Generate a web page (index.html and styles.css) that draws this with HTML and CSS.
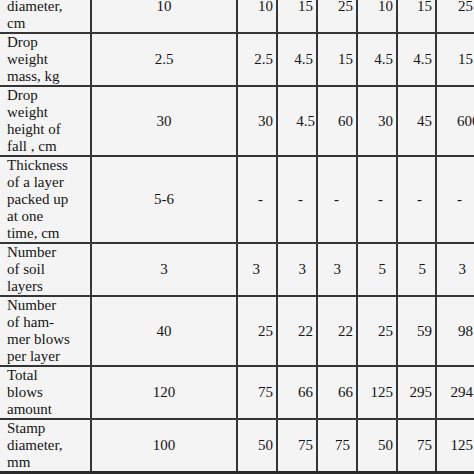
FILE: index.html
```html
<!DOCTYPE html>
<html>
<head>
<meta charset="utf-8">
<link rel="stylesheet" href="styles.css">
</head>
<body>
<table class="data">
  <colgroup>
    <col class="c-label"><col class="c-base"><col class="c-n"><col class="c-n"><col class="c-n"><col class="c-n"><col class="c-n7"><col class="c-n8">
  </colgroup>
  <tbody>
    <tr class="first">
      <td class="label">Mold<br>diameter,<br>cm</td>
      <td class="base">10</td>
      <td class="num">10</td><td class="num">15</td><td class="num">25</td><td class="num">10</td><td class="num">15</td><td class="num">25</td>
    </tr>
    <tr>
      <td class="label">Drop<br>weight<br>mass, kg</td>
      <td class="base">2.5</td>
      <td class="num">2.5</td><td class="num">4.5</td><td class="num">15</td><td class="num">4.5</td><td class="num">4.5</td><td class="num">15</td>
    </tr>
    <tr>
      <td class="label">Drop<br>weight<br>height of<br>fall , cm</td>
      <td class="base">30</td>
      <td class="num">30</td><td class="num p2">4.5</td><td class="num">60</td><td class="num">30</td><td class="num">45</td><td class="num over">600</td>
    </tr>
    <tr>
      <td class="label">Thickness<br>of a layer<br>packed up<br>at one<br>time, cm</td>
      <td class="base">5-6</td>
      <td class="num p14">-</td><td class="num p14">-</td><td class="num p18">-</td><td class="num p14">-</td><td class="num p14">-</td><td class="num p15">-</td>
    </tr>
    <tr>
      <td class="label">Number<br>of soil<br>layers</td>
      <td class="base">3</td>
      <td class="num p17">3</td><td class="num p11">3</td><td class="num p16">3</td><td class="num p11">5</td><td class="num p10">5</td><td class="num p11">3</td>
    </tr>
    <tr>
      <td class="label">Number<br>of ham-<br>mer blows<br>per layer</td>
      <td class="base">40</td>
      <td class="num">25</td><td class="num">22</td><td class="num">22</td><td class="num">25</td><td class="num">59</td><td class="num">98</td>
    </tr>
    <tr>
      <td class="label">Total<br>blows<br>amount</td>
      <td class="base">120</td>
      <td class="num">75</td><td class="num">66</td><td class="num">66</td><td class="num">125</td><td class="num">295</td><td class="num">294</td>
    </tr>
    <tr class="last">
      <td class="label">Stamp<br>diameter,<br>mm</td>
      <td class="base">100</td>
      <td class="num">50</td><td class="num">75</td><td class="num p7">75</td><td class="num">50</td><td class="num">75</td><td class="num">125</td>
    </tr>
  </tbody>
</table>
</body>
</html>
```

FILE: styles.css
```css
html, body {
  margin: 0;
  padding: 0;
  background: #f4f4f4;
  overflow: hidden;
  width: 474px;
  height: 474px;
}

.data {
  border-collapse: collapse;
  table-layout: fixed;
  width: 477px;
  margin-top: -19px;
  font-family: "Liberation Serif", "Times New Roman", serif;
  font-size: 15px;
  line-height: 17px;
  color: #151515;
  background: #f4f4f4;
}

.c-label { width: 91px; }
.c-base { width: 146px; }
.c-n { width: 40px; }
.c-n7 { width: 39px; }
.c-n8 { width: 41px; }

.data td {
  border: 2px solid #353535;
  padding: 0;
  vertical-align: middle;
  white-space: nowrap;
  overflow: hidden;
}

.data tr.first td { border-top: none; }
.data tr.last td { border-bottom: 4px solid #2a2a2a; }
.data td.label { border-left: none; padding-left: 7px; text-align: left; }
.data td.base { text-align: center; }
.data td.num { text-align: right; padding-right: 3px; }
.data td.num.over { text-align: left; padding-left: 20px; padding-right: 0; }

.data td.p2 { padding-right: 1px; }
.data td.p7 { padding-right: 6px; }
.data td.p10 { padding-right: 9px; }
.data td.p11 { padding-right: 10px; }
.data td.p14 { padding-right: 13px; }
.data td.p15 { padding-right: 14px; }
.data td.p16 { padding-right: 15px; }
.data td.p17 { padding-right: 16px; }
.data td.p18 { padding-right: 17px; }
```
